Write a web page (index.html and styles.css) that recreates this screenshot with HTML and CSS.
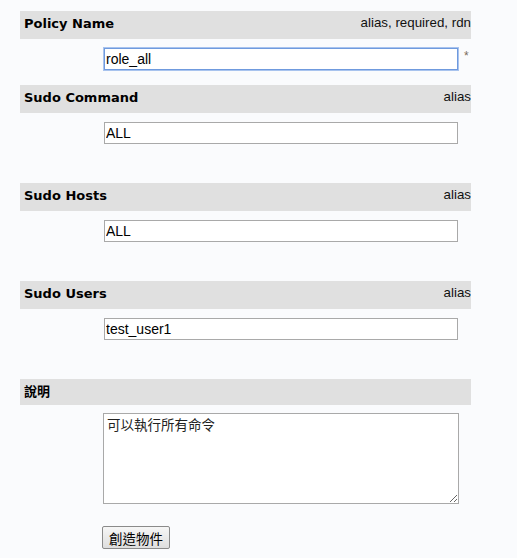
FILE: index.html
```html
<!DOCTYPE html>
<html>
<head>
<meta charset="utf-8">
<link rel="stylesheet" href="styles.css">
</head>
<body>
<form class="form">
  <div class="field first">
    <div class="bar"><span class="label">Policy Name</span><span class="flags">alias, required, rdn</span></div>
    <div class="row"><input class="text focused" type="text" value="role_all"><span class="req">*</span></div>
  </div>
  <div class="field">
    <div class="bar"><span class="label">Sudo Command</span><span class="flags">alias</span></div>
    <div class="row"><input class="text" type="text" value="ALL"></div>
  </div>
  <div class="field">
    <div class="bar"><span class="label">Sudo Hosts</span><span class="flags">alias</span></div>
    <div class="row"><input class="text" type="text" value="ALL"></div>
  </div>
  <div class="field">
    <div class="bar"><span class="label">Sudo Users</span><span class="flags">alias</span></div>
    <div class="row"><input class="text" type="text" value="test_user1"></div>
  </div>
  <div class="field last">
    <div class="bar short"><span class="label">說明</span></div>
    <div class="row"><textarea class="area">可以執行所有命令</textarea></div>
  </div>
  <div class="actions"><button class="btn" type="button">創造物件</button></div>
</form>
</body>
</html>
```
FILE: styles.css
```css
html, body {
  margin: 0;
  padding: 0;
  background: #fafbfd;
}
body {
  font-family: "DejaVu Sans", sans-serif;
  color: #000;
}
.form {
  display: flex;
  flex-direction: column;
  width: 451px;
  padding: 11px 0 0 20px;
  margin: 0;
}
.field {
  display: flex;
  flex-direction: column;
  gap: 9px;
  margin-bottom: 39px;
}
.field.first {
  margin-bottom: 15px;
}
.field.last {
  gap: 8px;
  margin-bottom: 22px;
}
.bar {
  display: flex;
  align-items: center;
  justify-content: space-between;
  height: 28px;
  background: #e0e0e0;
  padding: 0 0 4px 4px;
  box-sizing: border-box;
}
.bar.short {
  height: 26px;
  padding-bottom: 3px;
}
.label {
  font-family: "DejaVu Sans", "Noto Sans CJK TC", sans-serif;
  font-weight: bold;
  font-size: 13px;
  color: #000;
}
.flags {
  font-family: "Liberation Sans", sans-serif;
  font-size: 13.33px;
  color: #111;
  margin-bottom: 2px;
}
.row {
  display: flex;
  align-items: flex-start;
  padding-left: 84px;
}
.text {
  box-sizing: border-box;
  width: 354px;
  height: 22px;
  margin: 0;
  padding: 1px 1px;
  border: 1px solid #a9a9a9;
  background: #fff;
  font-family: "Liberation Sans", sans-serif;
  font-size: 14px;
  color: #000;
  outline: none;
}
.text.focused {
  border-color: #6f9ade;
  box-shadow: 0 0 0 1px #a8c3ee;
}
.req {
  font-family: "Liberation Sans", sans-serif;
  font-size: 12px;
  color: #7a6a5a;
  margin-left: 6px;
  line-height: 14px;
  padding-top: 1px;
}
.area {
  box-sizing: border-box;
  width: 356px;
  height: 91px;
  margin: 0 0 0 -1px;
  padding: 2px 3px;
  border: 1px solid #a9a9a9;
  background: #fff;
  font-family: "Noto Sans CJK TC", sans-serif;
  font-size: 13.5px;
  line-height: 16px;
  color: #222;
  resize: both;
}
.actions {
  display: flex;
  padding-left: 82px;
}
.btn {
  box-sizing: border-box;
  height: 23px;
  width: 68px;
  padding: 0;
  margin: 0;
  border: 1px solid #8a8a8a;
  border-radius: 2px;
  background: linear-gradient(#f6f6f6, #dedede);
  font-family: "Noto Sans CJK TC", sans-serif;
  font-size: 13.5px;
  color: #000;
}
```
